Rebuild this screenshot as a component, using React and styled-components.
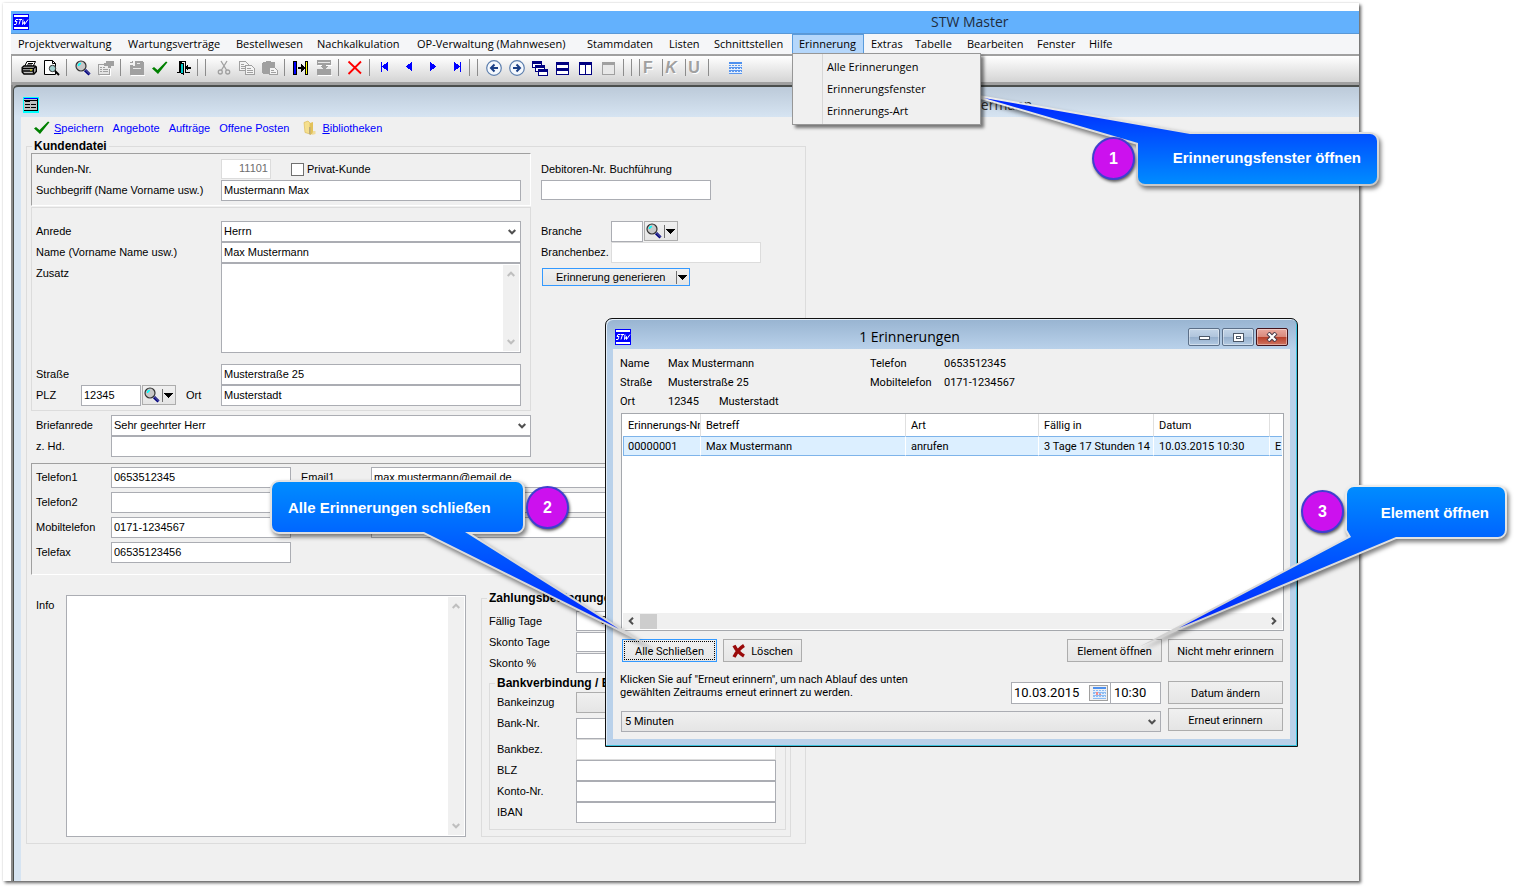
import styled, { createGlobalStyle, css } from 'styled-components';

const GlobalStyle = createGlobalStyle`
  *, *:before, *:after {
    box-sizing: border-box;
  }

  body {
    margin: 0;
    background: #fff;
    color: #000;
    font-family: 'Liberation Sans', Arial, sans-serif;
    font-size: 11px;
    line-height: 13px;
  }

  button, input, select, textarea {
    margin: 0;
    color: inherit;
    font: inherit;
    border-radius: 0;
    outline: none;
  }
`;

const uiFont = "'Open Sans', 'Noto Sans', sans-serif";
const dialogFont = "Roboto, 'Noto Sans', sans-serif";
const line = '#abadb3';
const softLine = '#dcdcdc';
const buttonFace = 'linear-gradient(#f0f0f0, #e5e5e5)';

/* ---------- main window ---------- */

const Page = styled.main`
  position: relative;
  display: flex;
  min-height: 100vh;
  padding: 3px 159px 8px 3px;
  overflow: hidden;
`;

const Sheet = styled.div`
  flex: 1;
  min-width: 0;
  display: flex;
  flex-direction: column;
  padding: 8px 0 0 8px;
  background: #fff;
  box-shadow: 2px 2px 3px rgba(0, 0, 0, 0.6), 0 0 2px rgba(0, 0, 0, 0.15);
`;

const TitleBar = styled.header`
  display: flex;
  align-items: center;
  height: 23px;
  padding: 0 2px;
  background: #63b1fd;
  border-bottom: 1px solid #5a98d6;
  font-family: ${uiFont};
  font-size: 14px;
  line-height: 20px;
  color: #1f2d3d;

  h1 {
    margin: 0 0 0 902px;
    font-size: 14px;
    font-weight: 400;
    white-space: nowrap;
  }
`;

const MenuBar = styled.nav`
  display: flex;
  height: 20px;
  background: #f5f6f8;
  font-family: ${uiFont};
`;

const MenuItem = styled.div`
  position: relative;
  width: ${({ $width }) => $width}px;
  flex-shrink: 0;

  > button {
    width: 100%;
    height: 20px;
    padding: 0 0 0 ${({ $open }) => ($open ? 6 : 7)}px;
    border: ${({ $open }) => ($open ? '1px solid #5a9bdc' : '0')};
    background: ${({ $open }) => ($open ? '#b5d7fb' : 'none')};
    text-align: left;
    white-space: nowrap;
    line-height: 16px;
  }
`;

const DropDown = styled.div`
  position: absolute;
  z-index: 2;
  top: 19px;
  left: 0;
  width: 189px;
  padding: 1px 2px 3px;
  background: linear-gradient(90deg, transparent 29px, #d7d7d7 29px, #d7d7d7 30px, transparent 30px) #f0f0f0;
  border: 1px solid #979797;
  box-shadow: 3px 3px 3px rgba(0, 0, 0, 0.5);

  button {
    display: block;
    width: 100%;
    height: 22px;
    padding: 0 0 0 32px;
    border: 0;
    background: none;
    text-align: left;
  }
`;

const ToolBar = styled.div`
  display: flex;
  align-items: flex-start;
  height: 31px;
  padding: 4px 0 0 9px;
  background: linear-gradient(#fff, #d4d4d4);
  border: solid #a0a0a0;
  border-width: 2px 0 3px 1px;
`;

const Tool = styled.button`
  flex-shrink: 0;
  width: 16px;
  height: 16px;
  margin-left: ${({ $gap = 7 }) => $gap}px;
  padding: 0;
  border: 0;
  background: none;

  svg {
    display: block;
  }
`;

const Letter = styled(Tool)`
  margin-left: 0;
  color: #a0a0a0;
  font: ${({ $italic }) => ($italic ? 'italic' : 'normal')} 900 16px/16px 'Liberation Sans', sans-serif;
  text-shadow: 1px 1px #fff;
`;

const Separator = styled.span`
  flex-shrink: 0;
  width: 1px;
  height: 17px;
  margin: -1px 0 0 ${({ $gap = 6 }) => $gap}px;
  background: #8c8c8c;
`;

const Workspace = styled.div`
  flex: 1;
  display: flex;
  border-left: 2px solid #8a8a8a;
  background: #a0a0a0;
`;

const ChildWindow = styled.section`
  flex: 1;
  min-width: 0;
  display: flex;
  flex-direction: column;
  padding-left: 7px;
  background: linear-gradient(#bccad9, #d6e4f2 30px);
  border: solid #4a4e4c;
  border-width: 2px 0 0 1px;
  border-top-left-radius: 5px;
`;

const ChildTitle = styled.header`
  display: flex;
  align-items: center;
  height: 30px;
  padding: 6px 0 0 2px;
  font-family: ${uiFont};

  h2 {
    margin: 0 0 0 909px;
    color: #333;
    font-size: 14px;
    font-weight: 400;
    line-height: 20px;
  }
`;

const FormArea = styled.div`
  flex: 1;
  padding: 0 0 0 5px;
  background: #f0f0f0;
`;

/* ---------- form parts ---------- */

const FormLinks = styled.div`
  display: flex;
  align-items: center;
  gap: 9px;
  height: 22px;
  padding-left: 8px;

  a {
    display: flex;
    align-items: center;
    color: #00f;
    text-decoration: none;
    white-space: nowrap;
  }

  a:last-child {
    margin-left: 4px;
  }

  svg {
    margin-right: 4px;
  }
`;

const Group = styled.fieldset`
  width: 100%;
  max-width: ${({ $width }) => $width}px;
  min-width: 0;
  margin: ${({ $top = 0 }) => $top}px 0 0 ${({ $left = 0 }) => $left}px;
  padding: 0 ${({ $pad = 4 }) => $pad}px 6px;
  border: 1px solid ${softLine};

  > legend {
    margin-left: ${({ $indent = 1 }) => $indent}px;
    padding: 0 2px;
    font-size: 12px;
    font-weight: 700;
    line-height: 14px;
    white-space: nowrap;
  }
`;

const Columns = styled.div`
  display: flex;
  align-items: flex-start;
  gap: ${({ $gap = 10 }) => $gap}px;
`;

const MainColumn = styled.div`
  width: 500px;
`;

const SideColumn = styled.div`
  flex: 1;
  padding-top: 6px;
`;

const Panel = styled.div`
  padding: ${({ $padding }) => $padding};
  margin-top: ${({ $top = 0 }) => $top}px;
  border: 1px solid ${softLine};

  ${({ $sunken }) =>
    $sunken &&
    css`
      border-color: #a0a0a0 #fff #fff #a0a0a0;
    `}
`;

const Row = styled.div`
  display: flex;
  align-items: flex-start;
  min-height: 21px;
  margin-top: ${({ $top = 0 }) => $top}px;
  padding-left: ${({ $indent = 0 }) => $indent}px;
`;

const Label = styled.label`
  flex-shrink: 0;
  width: ${({ $width }) => ($width ? `${$width}px` : 'auto')};
  line-height: 21px;
  white-space: nowrap;
`;

const field = css`
  width: ${({ $width }) => ($width ? `${$width}px` : '100%')};
  border: 1px solid ${({ $soft }) => ($soft ? softLine : line)};
  background: #fff;
`;

const Input = styled.input`
  ${field}
  height: ${({ $height = 21 }) => $height}px;
  margin-top: ${({ $top = 0 }) => $top}px;
  padding: 0 2px 2px;
  text-align: ${({ $right }) => ($right ? 'right' : 'left')};

  &:disabled {
    color: #6d6d6d;
  }
`;

const SelectBox = styled.div`
  position: relative;
  width: 100%;

  select {
    width: 100%;
    height: 21px;
    padding: 0 20px 0 ${({ $face }) => ($face ? 3 : 2)}px;
    appearance: none;
    border: 1px solid ${line};
    background: ${({ $face }) => ($face ? buttonFace : '#fff')};
  }

  svg {
    position: absolute;
    top: 7px;
    right: 5px;
    pointer-events: none;
  }
`;

const MemoBox = styled.div`
  ${field}
  display: flex;
  height: ${({ $height }) => $height}px;
  padding: 1px;

  textarea {
    flex: 1;
    min-width: 0;
    padding: 2px;
    border: 0;
    resize: none;
    overflow: hidden;
  }
`;

const VerticalTrack = styled.div`
  display: flex;
  flex-direction: column;
  align-items: center;
  justify-content: space-between;
  width: 16px;
  padding: 5px 0;
  background: #f0f0f0;
`;

const CheckLabel = styled.label`
  display: flex;
  align-items: center;
  gap: 3px;
  height: 20px;
  margin-left: 20px;

  input {
    width: 13px;
    height: 13px;
    appearance: none;
    border: 1px solid #707070;
    background: #fff;
  }
`;

const SplitButton = styled.button`
  flex-shrink: 0;
  display: flex;
  align-items: center;
  justify-content: space-between;
  width: ${({ $width }) => $width}px;
  height: ${({ $height }) => $height}px;
  margin-left: 1px;
  padding: 0 2px 0 ${({ $indent = 1 }) => $indent}px;
  border: 1px solid ${({ $active }) => ($active ? '#3399ff' : '#adadad')};
  background: ${buttonFace};
  white-space: nowrap;

  i {
    display: flex;
    align-items: center;
    height: 13px;
    padding-left: 1px;
    border-left: 1px solid #707070;
  }
`;

const FlatButton = styled.button`
  flex: 1;
  max-width: 200px;
  height: 21px;
  border: 1px solid #adadad;
  background: ${buttonFace};
`;

/* ---------- reminder dialog ---------- */

const Dialog = styled.section`
  position: absolute;
  top: 318px;
  left: 605px;
  width: 693px;
  padding: 0 7px 7px;
  background: linear-gradient(#98b4d1, #b9d1ea 30px);
  border: 1px solid #111;
  border-radius: 7px 7px 0 0;
  box-shadow: inset -1px -1px #3cc3de, inset 1px 1px #e4eef8;
  font-family: ${dialogFont};
`;

const DialogTitle = styled.header`
  display: flex;
  align-items: center;
  gap: 2px;
  height: 30px;
  padding: 6px 2px 0;
  font-family: ${uiFont};

  h2 {
    flex: 1;
    margin: 0;
    font-size: 14px;
    font-weight: 400;
    line-height: 20px;
    text-align: center;
  }
`;

const WindowButton = styled.button`
  display: flex;
  align-items: center;
  justify-content: center;
  width: 32px;
  height: 18px;
  padding: 0;
  border: 1px solid ${({ $close }) => ($close ? '#43141c' : '#5c7089')};
  border-radius: 2px;
  background: ${({ $close }) =>
    $close
      ? 'linear-gradient(#e9a99f, #d98a7d 48%, #b8402b 52%, #cf7461)'
      : 'linear-gradient(#c3d5e8, #b0c5dc 48%, #96b0cd 52%, #b3cae2)'};
  box-shadow: inset 0 0 0 1px rgba(255, 255, 255, 0.4);
`;

const DialogBody = styled.div`
  padding: 5px 6px 7px 8px;
  background: #f0f0f0;
`;

const Details = styled.dl`
  display: grid;
  grid-template-columns: 48px 202px 74px 1fr;
  grid-auto-rows: 19px;
  align-items: center;
  margin: 0 0 2px;

  dt, dd {
    margin: 0 0 0 -1px;
    white-space: nowrap;
  }

  span {
    margin-left: 20px;
  }
`;

const ListBox = styled.div`
  display: flex;
  flex-direction: column;
  height: 218px;
  padding: 0 1px 1px;
  background: #fff;
  border: 1px solid #a5a8ad;
`;

const Table = styled.table`
  width: 100%;
  table-layout: fixed;
  border-collapse: separate;
  border-spacing: 0;

  th, td {
    padding: 0 0 0 5px;
    overflow: hidden;
    border-right: 1px solid #e0e0e0;
    font-weight: 400;
    text-align: left;
    white-space: nowrap;
  }

  th {
    height: 22px;
  }

  td {
    height: 20px;
    background: #dcefff;
    border-top: 1px solid #7eb4ea;
    border-bottom: 1px solid #7eb4ea;
    border-right-color: #fff;
  }

  td:first-child {
    padding-left: 4px;
    border-left: 1px solid #7eb4ea;
  }

  th:last-child, td:last-child {
    border-right: 0;
  }
`;

const HorizontalTrack = styled.div`
  display: flex;
  align-items: center;
  height: 16px;
  margin-top: auto;
  padding: 0 4px;
  background: #f0f0f0;

  span {
    width: 17px;
    height: 15px;
    margin: 0 auto 0 5px;
    background: #cdcdcd;
  }
`;

const Actions = styled.div`
  display: flex;
  gap: 6px;
  margin: 8px 1px 0;
`;

const DialogButton = styled.button`
  display: flex;
  align-items: center;
  justify-content: center;
  gap: 5px;
  width: ${({ $width }) => $width}px;
  height: 23px;
  margin-left: ${({ $push }) => ($push ? 'auto' : 0)};
  padding: 1px 0 0;
  border: 1px solid #adadad;
  background: ${buttonFace};
  white-space: nowrap;

  ${({ $focus }) =>
    $focus &&
    css`
      border-color: #3399ff;
      outline: 1px dotted #000;
      outline-offset: -3px;
    `}
`;

const Footer = styled.div`
  display: grid;
  grid-template-columns: 1fr 115px;
  gap: 7px;
  margin: 9px 1px 0 0;
`;

const FooterButtons = styled.div`
  display: flex;
  flex-direction: column;
  gap: 4px;
  padding-top: 10px;
`;

const Snooze = styled.div`
  display: flex;
  justify-content: space-between;
  height: 33px;
  margin-bottom: 7px;

  p {
    margin: 2px 0 0 -1px;
    max-width: 300px;
  }
`;

const DateFields = styled.div`
  display: flex;
  height: 22px;
  margin-top: 11px;
  font-size: 13px;

  div {
    display: flex;
    align-items: center;
    width: 100px;
    padding-right: 2px;
    background: #fff;
    border: 1px solid ${line};
  }

  div input {
    flex: 1;
    min-width: 0;
    border: 0;
    padding: 0 2px 1px;
    background: none;
  }

  div button {
    display: flex;
    align-items: center;
    justify-content: center;
    width: 19px;
    height: 16px;
    padding: 0;
    border: 1px solid #a0a0a0;
    background: #f0f0f0;
  }

  > input {
    width: 50px;
    padding: 0 2px 1px 3px;
    border: 1px solid ${line};
    border-left: 0;
  }
`;

/* ---------- callouts ---------- */

const CalloutShapes = styled.svg`
  position: absolute;
  top: 0;
  left: 0;
  pointer-events: none;

  path {
    stroke-width: 4;
    stroke-linejoin: miter;
    stroke-miterlimit: 40;
    paint-order: stroke;
    filter: drop-shadow(2px 3px 2px rgba(0, 0, 0, 0.5));
  }
`;

const CalloutText = styled.div`
  position: absolute;
  top: ${({ $y }) => $y}px;
  left: ${({ $x }) => $x}px;
  display: flex;
  align-items: center;
  justify-content: ${({ $align }) => $align};
  width: ${({ $width }) => $width}px;
  height: 50px;
  padding: 0 16px;
  color: #fff;
  font-size: 15px;
  font-weight: 700;
  white-space: nowrap;
`;

const CalloutNumber = styled.div`
  position: absolute;
  top: ${({ $y }) => $y}px;
  left: ${({ $x }) => $x}px;
  display: flex;
  align-items: center;
  justify-content: center;
  width: 43px;
  height: 43px;
  border: 2px solid #3f3fd0;
  border-radius: 50%;
  background: #cc11ee;
  box-shadow: 1px 2px 3px rgba(0, 0, 0, 0.6);
  color: #fff;
  font-size: 16px;
  font-weight: 700;
`;

/* ---------- icons ---------- */

const Svg = ({ size = 16, height, crisp = true, children }) => (
  <svg
    width={size}
    height={height || size}
    viewBox={`0 0 ${size} ${height || size}`}
    fill="none"
    shapeRendering={crisp ? 'crispEdges' : 'auto'}
    aria-hidden="true"
  >
    {children}
  </svg>
);

const StwIcon = () => (
  <Svg>
    <path fill="#00f" d="M0 0h16v16H0z" />
    <path fill="#fff" d="M1 1h14v2H1zM1 13h14v2H1z" />
    <path
      stroke="#fff"
      shapeRendering="auto"
      d="M5 5.5H3L2 7.5h2l-1 3H1M5.500 5.500h3.500M7.500 5.500l-1.500 5M10 5.500l-.5 5 2-3v3l3.500-5"
    />
  </Svg>
);

const TableIcon = () => (
  <Svg>
    <path fill="#0ff" d="M0 0h16v16H0z" />
    <path fill="#c0c0c0" d="M1 1h13v13H1z" />
    <path fill="#00f" d="M1 1h14v1H1z" />
    <path fill="#000" d="M14 2h1v12h-1zM1 3h13v1H1zM2 4h5v1H2zM2 7h5v1H2zM8 7h5v1H8zM2 10h5v1H2zM8 10h5v1H8zM1 13h13v1H1z" />
  </Svg>
);

const PrinterIcon = () => (
  <Svg crisp={false}>
    <path fill="#fff" stroke="#000" d="M6 1.500h8.500l-2.500 5H3.500z" />
    <path stroke="#000" d="M7 3.500h5M6 5h5" />
    <path fill="#c0c0c0" stroke="#000" strokeWidth="1.400" d="M1.200 7.500 3 6h11l1.300 1v4.500L13 14H3l-1.800-2z" />
    <path stroke="#000" strokeWidth="1.400" d="M1.500 8.500h11l2.500-2M12.500 8.500v5M2 11h10" />
    <path stroke="#ff0" d="M9 10h2" />
  </Svg>
);

const PreviewIcon = () => (
  <Svg crisp={false}>
    <path fill="#fff" stroke="#000" d="M.5.5h8l3 3v11H.5z" />
    <path stroke="#000" d="M8.500.5v3h3" />
    <circle cx="8.500" cy="8.500" r="3.200" fill="#9fd0d0" stroke="#333" />
    <path stroke="#000" strokeWidth="2" d="m11 11 4 4" />
  </Svg>
);

const SearchIcon = () => (
  <Svg crisp={false}>
    <circle cx="6" cy="6" r="5" fill="#c8c8c8" stroke="#333" strokeWidth="1.200" />
    <path stroke="#0ff" strokeWidth="1.500" d="M3.500 6c0-1.500 1-2.500 2.500-2.500" />
    <path stroke="#000080" strokeWidth="3" d="m10 10.200 4.500 4.300" />
    <path stroke="#88a" strokeWidth=".8" d="m10.500 10 4 4" />
  </Svg>
);

const PropertiesIcon = () => (
  <Svg>
    <path stroke="#fff" d="M2 15.500h10M12.500 9v7" />
    <path stroke="#a0a0a0" d="M.5 4.500h5M.5 4v10.500h11V9M2 7.500h2M5 7.500h2M2 9.500h2M5 9.500h5M2 11.500h2M5 11.500h5" />
    <path fill="#a0a0a0" d="M8 1h8v5h-3v2h-3V6H6V3h2z" />
  </Svg>
);

const SaveIcon = () => (
  <Svg>
    <path fill="#fff" d="M2 15h14V5h1v11H2z" />
    <path fill="#a0a0a0" d="M1 5h3v1h2V1h7l2 2v12H1zM3 1h1v2H3zM1 2h2v1H1z" />
    <path fill="#e8e8e8" d="M8 3h3v1H8zM4 8h8v1H4z" />
  </Svg>
);

const CheckIcon = () => (
  <Svg crisp={false}>
    <path fill="#008000" d="M0 8.500 2 7l3.500 3L14 1.500l1.500.8L6 14z" />
  </Svg>
);

const DoorIcon = () => (
  <Svg>
    <path stroke="#000" d="M1 12.500h3M3.500 1v11M3 1.500h7M9.500 2v10M9 12.500h5" />
    <path fill="#0cc" stroke="#000" d="M4.500 2.500 7.500 4v10.500l-3-2z" />
    <path fill="#000" d="m9 7.500 3-3v2h3v2h-3v2z" />
  </Svg>
);

const CutIcon = () => (
  <Svg crisp={false}>
    <g stroke="#a0a0a0" strokeWidth="1.300">
      <path d="m5 1 5.500 9M11 1 5.500 10" />
      <circle cx="4.300" cy="12" r="2" />
      <circle cx="11.700" cy="12" r="2" />
    </g>
  </Svg>
);

const CopyIcon = () => (
  <Svg>
    <path fill="#f4f4f4" stroke="#a0a0a0" d="M.5 1.500h6l3 3v6h-9z" />
    <path stroke="#a0a0a0" d="M2 4.500h3M2 6.500h4M2 8.500h4" />
    <path fill="#f4f4f4" stroke="#a0a0a0" d="M6.500 5.500h6l3 3v6h-9z" />
    <path stroke="#a0a0a0" d="M8 8.500h4M8 10.500h6M8 12.500h6" />
  </Svg>
);

const PasteIcon = () => (
  <Svg>
    <path fill="#a0a0a0" d="M4 1h5v1h3l1 1v5H8v6H1L0 13V3l1-1h3z" />
    <path fill="#f4f4f4" stroke="#a0a0a0" d="M7.500 7.500h5l3 3v4h-8z" />
    <path stroke="#a0a0a0" d="M9 10.500h3M9 12.500h5" />
  </Svg>
);

const InsertIcon = () => (
  <Svg>
    <path fill="#000" d="M0 1h4v14H0zM12 1h3v14h-3zM5 7h3V4l4 4-4 4V9H5z" />
    <path fill="#00f" d="M1 2h2v12H1z" />
    <path fill="#ff0" d="M13 2h1v12h-1z" />
  </Svg>
);

const StackIcon = () => (
  <Svg>
    <path fill="#fff" d="M2 5h14v1H2zM2 15h14v1H2z" />
    <path fill="#a0a0a0" d="M1 0h14v5h-5v1h2L9 9H7L4 6h2V5H1zM1 9h14v6H1z" />
    <path fill="#e8e8e8" d="M2 2h12v1H2z" />
  </Svg>
);

const RedCrossIcon = () => (
  <Svg crisp={false}>
    <path stroke="#f00" strokeWidth="1.800" d="M1.500 1.500 14 13.500M14 1.500 1.500 14" />
  </Svg>
);

const StepIcon = ({ back, bar }) => (
  <Svg>
    <g fill="#00f" transform={back ? undefined : 'matrix(-1 0 0 1 16 0)'}>
      <path d="m5 6.500 6-5v10z" />
      {bar && <path d="M4 2h1v10H4z" />}
    </g>
  </Svg>
);

const RoundArrowIcon = ({ right }) => (
  <Svg crisp={false}>
    <circle cx="8" cy="8" r="7.300" fill="#f4f8fd" stroke="#5d7fae" strokeWidth="1.200" />
    <path
      stroke="#1a3f86"
      strokeWidth="2"
      d={right ? 'M4 8h7M7.500 4.500 11 8l-3.500 3.500' : 'M12 8H5M8.500 4.500 5 8l3.500 3.500'}
    />
  </Svg>
);

const CascadeIcon = () => (
  <Svg>
    {[[0, 1], [3, 5], [6, 9]].map(([x, y]) => (
      <g key={x}>
        <path fill="#000080" d={`M${x} ${y}h10v7H${x}z`} />
        <path fill="#fff" d={`M${x + 1} ${y + 3}h8v3H${x + 1}z`} />
      </g>
    ))}
  </Svg>
);

const RowsIcon = () => (
  <Svg>
    <path fill="#000080" d="M1 2h13v13H1z" />
    <path fill="#fff" d="M2 5h11v3H2zM2 11h11v3H2z" />
  </Svg>
);

const ColumnsIcon = () => (
  <Svg>
    <path fill="#000080" d="M1 2h13v13H1z" />
    <path fill="#fff" d="M2 5h5v9H2zM8 5h5v9H8z" />
  </Svg>
);

const WindowIcon = () => (
  <Svg>
    <path fill="#a0a0a0" d="M1 2h13v13H1z" />
    <path fill="#e8e8e8" d="M2 5h11v9H2z" />
  </Svg>
);

const CalendarIcon = ({ red }) => (
  <Svg>
    <path fill="#4d90ee" d="M2 2h13v2H2z" />
    <path fill={red ? '#8dbcf2' : '#5b97ee'} d="M2 5h13v9H2z" />
    <path
      stroke="#e4eefb"
      strokeDasharray="2 1"
      d="M2 6.500h13M2 9.500h13M2 12.500h13M4.500 5v9M7.500 5v9M10.500 5v9M13.500 5v9"
    />
    {red && <path fill="#f08a8a" d="M5 7h2v3H5zM8 9h2v1H8z" />}
  </Svg>
);

const FolderIcon = () => (
  <Svg crisp={false}>
    <path fill="#f5df8e" stroke="#d9b64c" strokeWidth=".6" d="M2 2.500 6 1l2 2v11l-5-1.500z" />
    <path fill="#e3c25a" d="M8 3l3-1v11.500L8 15z" />
    <path fill="#b9aa7c" d="M7 7h1.500v8L7 14z" />
    <path fill="#f0dc9a" d="M11 11h2.500v3L10 15z" />
  </Svg>
);

const DarkCrossIcon = () => (
  <Svg size={14} crisp={false}>
    <path stroke="#9a0a0a" strokeWidth="3.400" d="M2 1.500c2 4 5 7.500 10 10.500M12 1.500C8 4 4.500 8 2 13" />
  </Svg>
);

const Chevron = ({ dir = 'down', color = '#505050' }) => {
  const angle = { down: 0, left: 90, up: 180, right: 270 }[dir];
  return (
    <Svg size={8} crisp={false}>
      <path stroke={color} strokeWidth="2" transform={`rotate(${angle} 4 4)`} d="m.7 2 3.300 3.300L7.300 2" />
    </Svg>
  );
};

const Caret = () => (
  <i>
    <Svg size={9} height={5}>
      <path fill="#000" d="M0 0h9L4.500 5z" />
    </Svg>
  </i>
);

/* ---------- data ---------- */

const menus = [
  ['Projektverwaltung', 110],
  ['Wartungsverträge', 108],
  ['Bestellwesen', 81],
  ['Nachkalkulation', 100],
  ['OP-Verwaltung (Mahnwesen)', 170],
  ['Stammdaten', 82],
  ['Listen', 45],
  ['Schnittstellen', 85],
  ['Erinnerung', 72],
  ['Extras', 44],
  ['Tabelle', 52],
  ['Bearbeiten', 70],
  ['Fenster', 52],
  ['Hilfe', 40],
];

const reminderMenu = ['Alle Erinnerungen', 'Erinnerungsfenster', 'Erinnerungs-Art'];

const columns = [
  ['Erinnerungs-Nr', 78],
  ['Betreff', 205],
  ['Art', 133],
  ['Fällig in', 115],
  ['Datum', 116],
  ['', null],
];

const reminder = ['00000001', 'Max Mustermann', 'anrufen', '3 Tage 17 Stunden 14', '10.03.2015 10:30', 'E'];

const callouts = [
  {
    id: 1,
    text: 'Erinnerungsfenster öffnen',
    box: { $x: 1138, $y: 132, $width: 239, $align: 'flex-end' },
    dot: { $x: 1092, $y: 137 },
    fill: ['#0022ff', '#004dff', '#008cff'],
    stroke: ['#ececec', '#c8c8c8'],
    d: 'M984 98 1190 134H1370a7 7 0 0 1 7 7V177a7 7 0 0 1-7 7H1145a7 7 0 0 1-7-7V143z',
  },
  {
    id: 2,
    text: 'Alle Erinnerungen schließen',
    box: { $x: 272, $y: 482, $width: 251, $align: 'flex-start' },
    dot: { $x: 526, $y: 486 },
    fill: ['#008cff', '#0060ff', '#0022ff'],
    stroke: ['#e4e4e4', '#d4d4d4'],
    d: 'M279 482H516a7 7 0 0 1 7 7V525a7 7 0 0 1-7 7H465L619 629 424 532H279a7 7 0 0 1-7-7V489a7 7 0 0 1 7-7z',
  },
  {
    id: 3,
    text: 'Element öffnen',
    box: { $x: 1347, $y: 487, $width: 158, $align: 'flex-end' },
    dot: { $x: 1301, $y: 490 },
    fill: ['#008cff', '#0060ff', '#0022ff'],
    stroke: ['#ececec', '#d0d0d0'],
    d: 'M1354 487H1498a7 7 0 0 1 7 7V530a7 7 0 0 1-7 7H1396L1179 628 1351 537 1347 530V494a7 7 0 0 1 7-7z',
  },
];

/* ---------- sections ---------- */

const Menu = () => (
  <MenuBar>
    {menus.map(([name, width]) => {
      const open = name === 'Erinnerung';
      return (
        <MenuItem key={name} $width={width} $open={open}>
          <button type="button">{name}</button>
          {open && (
            <DropDown>
              {reminderMenu.map((entry) => (
                <button type="button" key={entry}>{entry}</button>
              ))}
            </DropDown>
          )}
        </MenuItem>
      );
    })}
  </MenuBar>
);

const Tools = () => (
  <ToolBar role="toolbar">
    <Tool $gap={0} aria-label="Drucken"><PrinterIcon /></Tool>
    <Tool aria-label="Vorschau"><PreviewIcon /></Tool>
    <Separator />
    <Tool $gap={8} aria-label="Suchen"><SearchIcon /></Tool>
    <Tool aria-label="Eigenschaften"><PropertiesIcon /></Tool>
    <Separator />
    <Tool $gap={8} aria-label="Sichern"><SaveIcon /></Tool>
    <Tool aria-label="Übernehmen"><CheckIcon /></Tool>
    <Tool $gap={8} aria-label="Schließen"><DoorIcon /></Tool>
    <Separator $gap={5} />
    <Separator $gap={7} />
    <Tool $gap={10} aria-label="Ausschneiden"><CutIcon /></Tool>
    <Tool aria-label="Kopieren"><CopyIcon /></Tool>
    <Tool aria-label="Einfügen"><PasteIcon /></Tool>
    <Separator />
    <Tool $gap={8} aria-label="Zeile einfügen"><InsertIcon /></Tool>
    <Tool aria-label="Stapeln"><StackIcon /></Tool>
    <Separator />
    <Tool $gap={8} aria-label="Entfernen"><RedCrossIcon /></Tool>
    <Separator />
    <Tool aria-label="Erster"><StepIcon back bar /></Tool>
    <Tool $gap={8} aria-label="Zurück"><StepIcon back /></Tool>
    <Tool $gap={8} aria-label="Weiter"><StepIcon /></Tool>
    <Tool $gap={8} aria-label="Letzter"><StepIcon bar /></Tool>
    <Separator $gap={4} />
    <Separator $gap={7} />
    <Tool $gap={8} aria-label="Vorheriges Fenster"><RoundArrowIcon /></Tool>
    <Tool aria-label="Nächstes Fenster"><RoundArrowIcon right /></Tool>
    <Tool aria-label="Überlappend"><CascadeIcon /></Tool>
    <Tool aria-label="Untereinander"><RowsIcon /></Tool>
    <Tool aria-label="Nebeneinander"><ColumnsIcon /></Tool>
    <Tool aria-label="Symbole anordnen"><WindowIcon /></Tool>
    <Separator />
    <Separator $gap={7} />
    <Separator $gap={7} />
    <Letter>F</Letter>
    <Separator />
    <Letter $italic>K</Letter>
    <Separator />
    <Letter>U</Letter>
    <Separator />
    <Tool $gap={18} aria-label="Kalender"><CalendarIcon /></Tool>
  </ToolBar>
);

const Memo = ({ id, width, height }) => (
  <MemoBox $width={width} $height={height}>
    <textarea id={id} />
    <VerticalTrack>
      <Chevron dir="up" color="#bfbfbf" />
      <Chevron color="#bfbfbf" />
    </VerticalTrack>
  </MemoBox>
);

const Field = ({ id, label, labelWidth, top, indent, ...input }) => (
  <Row $top={top} $indent={indent}>
    <Label htmlFor={id} $width={labelWidth}>{label}</Label>
    <Input id={id} {...input} />
  </Row>
);

const PersonFields = () => (
  <MainColumn>
    <Panel $sunken $padding="5px 9px 4px 4px">
      <Row>
        <Label htmlFor="nr" $width={185}>Kunden-Nr.</Label>
        <Input id="nr" $width={50} $height={20} $soft $right disabled defaultValue="11101" />
        <CheckLabel><input type="checkbox" />Privat-Kunde</CheckLabel>
      </Row>
      <Field id="such" label="Suchbegriff (Name Vorname usw.)" labelWidth={185} defaultValue="Mustermann Max" />
    </Panel>
    <Panel $top={1} $padding="13px 9px 4px 4px">
      <Row>
        <Label htmlFor="anrede" $width={185}>Anrede</Label>
        <SelectBox>
          <select id="anrede"><option>Herrn</option></select>
          <Chevron />
        </SelectBox>
      </Row>
      <Field id="name" label="Name (Vorname Name usw.)" labelWidth={185} defaultValue="Max Mustermann" />
      <Row>
        <Label htmlFor="zusatz" $width={185}>Zusatz</Label>
        <Memo id="zusatz" height={90} />
      </Row>
      <Field id="strasse" label="Straße" labelWidth={185} top={11} defaultValue="Musterstraße 25" />
      <Row>
        <Label htmlFor="plz" $width={45}>PLZ</Label>
        <Input id="plz" $width={60} defaultValue="12345" />
        <SplitButton $width={34} $height={20} aria-label="PLZ suchen"><SearchIcon /><Caret /></SplitButton>
        <Row $indent={10}>
          <Label htmlFor="ort" $width={35}>Ort</Label>
          <Input id="ort" $width={300} defaultValue="Musterstadt" />
        </Row>
      </Row>
    </Panel>
    <Row $top={4} $indent={5}>
      <Label htmlFor="brief" $width={75}>Briefanrede</Label>
      <SelectBox>
        <select id="brief"><option>Sehr geehrter Herr</option></select>
        <Chevron />
      </SelectBox>
    </Row>
    <Field id="zhd" label="z. Hd." labelWidth={75} indent={5} />
  </MainColumn>
);

const BranchFields = () => (
  <SideColumn>
    <Label htmlFor="debitor">Debitoren-Nr. Buchführung</Label>
    <Row>
      <Input id="debitor" $width={170} $height={20} />
    </Row>
    <Row $top={20}>
      <Label htmlFor="branche" $width={70}>Branche</Label>
      <Input id="branche" $width={32} />
      <SplitButton $width={34} $height={20} aria-label="Branche suchen"><SearchIcon /><Caret /></SplitButton>
    </Row>
    <Row>
      <Label htmlFor="branchenbez" $width={70}>Branchenbez.</Label>
      <Input id="branchenbez" $width={150} $soft />
    </Row>
    <Row $top={5}>
      <SplitButton $width={148} $height={18} $indent={13} $active>Erinnerung generieren<Caret /></SplitButton>
    </Row>
  </SideColumn>
);

const ContactFields = () => (
  <Panel $sunken $top={6} $padding="3px 4px 11px 4px">
    <Columns>
      <div>
        <Field id="tel1" label="Telefon1" labelWidth={75} $width={180} defaultValue="0653512345" />
        <Field id="tel2" label="Telefon2" labelWidth={75} top={4} $width={180} />
        <Field id="mobil" label="Mobiltelefon" labelWidth={75} top={4} $width={180} defaultValue="0171-1234567" />
        <Field id="fax" label="Telefax" labelWidth={75} top={4} $width={180} defaultValue="06535123456" />
      </div>
      <div>
        <Field id="mail1" label="Email1" labelWidth={70} $width={400} defaultValue="max.mustermann@email.de" />
        <Field id="mail2" aria-label="Email2" labelWidth={70} top={4} $width={400} />
        <Field id="web" label="Homepage" labelWidth={70} top={4} $width={400} />
      </div>
    </Columns>
  </Panel>
);

const InfoBox = styled(Row)`
  padding-top: 4px;
`;

const PaymentFields = () => (
  <Columns $gap={15}>
    <InfoBox $top={16} $indent={5}>
      <Label htmlFor="info" $width={30}>Info</Label>
      <Memo id="info" width={400} height={242} />
    </InfoBox>
    <Group $width={310} $top={16}>
      <legend>Zahlungsbedingungen</legend>
      <Field id="faellig" label="Fällig Tage" labelWidth={87} top={6} indent={3} $width={40} $height={20} $right defaultValue="30" />
      <Field id="skontotage" label="Skonto Tage" labelWidth={87} indent={3} $width={40} $height={20} />
      <Field id="skonto" label="Skonto %" labelWidth={87} indent={3} $width={40} $height={20} />
      <Group $width={297} $top={2} $left={3} $pad={7} $indent={-2}>
        <legend>Bankverbindung / Bank</legend>
        <Row $top={2}>
          <Label htmlFor="einzug" $width={79}>Bankeinzug</Label>
          <FlatButton id="einzug" />
        </Row>
        <Field id="banknr" label="Bank-Nr." labelWidth={79} $top={5} $width={200} />
        <Field id="bankbez" label="Bankbez." labelWidth={79} $width={200} $soft />
        <Field id="blz" label="BLZ" labelWidth={79} $width={200} />
        <Field id="konto" label="Konto-Nr." labelWidth={79} $width={200} />
        <Field id="iban" label="IBAN" labelWidth={79} $width={200} />
      </Group>
    </Group>
  </Columns>
);

const ReminderDialog = () => (
  <Dialog>
    <DialogTitle>
      <StwIcon />
      <h2>1 Erinnerungen</h2>
      <WindowButton aria-label="Minimieren">
        <Svg size={11} height={8}><path fill="#fff" stroke="#4c5868" d="M.5 3.500h10v3H.5z" /></Svg>
      </WindowButton>
      <WindowButton aria-label="Maximieren">
        <Svg size={11} height={9}><path fill="#fff" stroke="#4c5868" d="M.5.5h10v8H.5zM3.500 3.500h4v2h-4z" /></Svg>
      </WindowButton>
      <WindowButton $close aria-label="Schließen">
        <Svg size={12} height={10} crisp={false}>
          <path stroke="#4a3a48" strokeWidth="4.200" d="m2 1 8 8M10 1 2 9" />
          <path stroke="#fff" strokeWidth="2.200" d="m2.500 1.500 7 7M9.500 1.500l-7 7" />
        </Svg>
      </WindowButton>
    </DialogTitle>
    <DialogBody>
      <Details>
        <dt>Name</dt><dd>Max Mustermann</dd>
        <dt>Telefon</dt><dd>0653512345</dd>
        <dt>Straße</dt><dd>Musterstraße 25</dd>
        <dt>Mobiltelefon</dt><dd>0171-1234567</dd>
        <dt>Ort</dt><dd>12345<span>Musterstadt</span></dd>
      </Details>
      <ListBox>
        <Table>
          <colgroup>
            {columns.map(([name, width]) => <col key={name} width={width} />)}
          </colgroup>
          <thead>
            <tr>{columns.map(([name]) => <th key={name}>{name}</th>)}</tr>
          </thead>
          <tbody>
            <tr>{reminder.map((cell) => <td key={cell}>{cell}</td>)}</tr>
          </tbody>
        </Table>
        <HorizontalTrack>
          <Chevron dir="left" />
          <span />
          <Chevron dir="right" />
        </HorizontalTrack>
      </ListBox>
      <Actions>
        <DialogButton $width={95} $focus>Alle Schließen</DialogButton>
        <DialogButton $width={79}><DarkCrossIcon />Löschen</DialogButton>
        <DialogButton $width={95} $push>Element öffnen</DialogButton>
        <DialogButton $width={115}>Nicht mehr erinnern</DialogButton>
      </Actions>
      <Footer>
        <div>
          <Snooze>
            <p>
              Klicken Sie auf "Erneut erinnern", um nach Ablauf des unten
              <br />
              gewählten Zeitraums erneut erinnert zu werden.
            </p>
            <DateFields>
              <div>
                <input aria-label="Datum" defaultValue="10.03.2015" />
                <button type="button" aria-label="Kalender öffnen"><CalendarIcon red /></button>
              </div>
              <input aria-label="Uhrzeit" defaultValue="10:30" />
            </DateFields>
          </Snooze>
          <SelectBox $face>
            <select aria-label="Zeitraum"><option>5 Minuten</option></select>
            <Chevron />
          </SelectBox>
        </div>
        <FooterButtons>
          <DialogButton>Datum ändern</DialogButton>
          <DialogButton>Erneut erinnern</DialogButton>
        </FooterButtons>
      </Footer>
    </DialogBody>
  </Dialog>
);

const Callouts = () => (
  <>
    <CalloutShapes width="1518" height="889" viewBox="0 0 1518 889" aria-hidden="true">
      <defs>
        {callouts.map(({ id, fill, stroke }) => (
          <g key={id}>
            <linearGradient id={`fill${id}`} x2="0" y2="1">
              <stop offset="0" stopColor={fill[0]} />
              <stop offset="0.4" stopColor={fill[1]} />
              <stop offset="1" stopColor={fill[2]} />
            </linearGradient>
            <linearGradient id={`stroke${id}`} x2="0" y2="1">
              <stop offset="0" stopColor={stroke[0]} />
              <stop offset="1" stopColor={stroke[1]} />
            </linearGradient>
          </g>
        ))}
      </defs>
      {callouts.map(({ id, d }) => (
        <path key={id} d={d} fill={`url(#fill${id})`} stroke={`url(#stroke${id})`} />
      ))}
    </CalloutShapes>
    {callouts.map(({ id, text, box, dot }) => (
      <div key={id}>
        <CalloutText {...box}>{text}</CalloutText>
        <CalloutNumber {...dot}>{id}</CalloutNumber>
      </div>
    ))}
  </>
);

const App = () => (
  <Page>
    <GlobalStyle />
    <Sheet>
      <TitleBar>
        <StwIcon />
        <h1>STW Master</h1>
      </TitleBar>
      <Menu />
      <Tools />
      <Workspace>
        <ChildWindow>
          <ChildTitle>
            <TableIcon />
            <h2>Mustermann</h2>
          </ChildTitle>
          <FormArea>
            <FormLinks>
              <a href="#speichern"><CheckIcon /><u>S</u>peichern</a>
              <a href="#angebote">Angebote</a>
              <a href="#auftraege">Aufträge</a>
              <a href="#posten">Offene Posten</a>
              <a href="#bibliotheken"><FolderIcon /><u>B</u>ibliotheken</a>
            </FormLinks>
            <Group $width={780}>
              <legend>Kundendatei</legend>
              <Columns>
                <PersonFields />
                <BranchFields />
              </Columns>
              <ContactFields />
              <PaymentFields />
            </Group>
          </FormArea>
        </ChildWindow>
      </Workspace>
    </Sheet>
    <ReminderDialog />
    <Callouts />
  </Page>
);

export default App;
